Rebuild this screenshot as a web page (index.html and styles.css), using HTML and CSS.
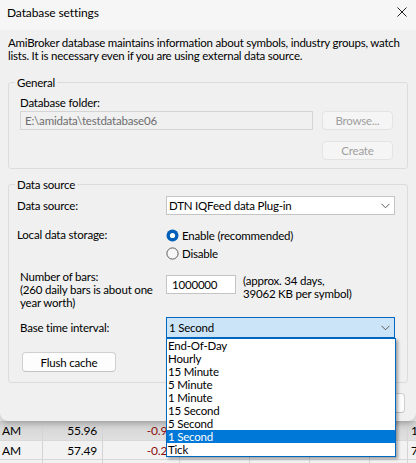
FILE: index.html
```html
<!DOCTYPE html>
<html>
<head>
<meta charset="utf-8">
<title>Database settings</title>
<link rel="stylesheet" href="styles.css">
</head>
<body>
<div class="dialog">
  <div class="titlebar">
    <span class="title">Database settings</span>
    <svg class="close" width="10" height="10" viewBox="0 0 10 10"><path d="M0.5 0.5 L9.5 9.5 M9.5 0.5 L0.5 9.5" stroke="#222" stroke-width="1" fill="none"/></svg>
  </div>
  <div class="content">
    <p class="intro">AmiBroker database maintains information about symbols, industry groups, watch<br>lists. It is necessary even if you are using external data source.</p>

    <fieldset class="group general">
      <legend>General</legend>
      <div class="field-label">Database folder:</div>
      <div class="folder-row">
        <div class="textbox disabled">E:\amidata\testdatabase06</div>
        <div class="btn disabled browse">Browse...</div>
      </div>
      <div class="create-row"><div class="btn disabled browse">Create</div></div>
    </fieldset>

    <fieldset class="group source">
      <legend>Data source</legend>
      <div class="row row-source">
        <div class="row-label shift">Data source:</div>
        <div class="select">
          <span>DTN IQFeed data Plug-in</span>
          <svg class="chevron" width="9" height="6" viewBox="0 0 9 6"><path d="M0.5 0.8 L4.5 4.8 L8.5 0.8" stroke="#5a5a5a" stroke-width="1" fill="none"/></svg>
        </div>
      </div>
      <div class="row row-storage">
        <div class="row-label shift tall">Local data storage:</div>
        <div class="radios">
          <div class="radio">
            <svg width="13" height="13" viewBox="0 0 13 13"><circle cx="6.5" cy="6.5" r="6" fill="#005fb8"/><circle cx="6.5" cy="6.5" r="2.6" fill="#fff"/></svg>
            <span>Enable (recommended)</span>
          </div>
          <div class="radio">
            <svg width="13" height="13" viewBox="0 0 13 13"><circle cx="6.5" cy="6.5" r="5.6" fill="#f7f7f7" stroke="#5c5c5c" stroke-width="1"/></svg>
            <span>Disable</span>
          </div>
        </div>
      </div>
      <div class="row row-bars">
        <div class="row-label">Number of bars:<br>(260 daily bars is about one<br>year worth)</div>
        <div class="bars">
          <div class="textbox bars-input">1000000</div>
          <div class="approx">(approx. 34 days,<br>39062 KB per symbol)</div>
        </div>
      </div>
      <div class="row row-interval">
        <div class="row-label">Base time interval:</div>
        <div class="select focused">
          <span>1 Second</span>
          <svg class="chevron" width="9" height="6" viewBox="0 0 9 6"><path d="M0.5 0.8 L4.5 4.8 L8.5 0.8" stroke="#5a5a5a" stroke-width="1" fill="none"/></svg>
        </div>
      </div>
      <div class="row row-flush">
        <div class="btn flush">Flush cache</div>
      </div>
    </fieldset>

    <div class="button-row"><div class="btn ok">OK</div></div>
  </div>
</div>

<div class="sheet">
  <div class="sheet-row first">
    <div class="cell">AM</div>
    <div class="cell num">55.96</div>
    <div class="cell num neg">-0.97</div>
    <div class="cell"></div>
    <div class="cell"></div>
    <div class="cell"></div>
    <div class="cell"></div>
    <div class="cell last">1</div>
  </div>
  <div class="sheet-row">
    <div class="cell">AM</div>
    <div class="cell num">57.49</div>
    <div class="cell num neg">-0.21</div>
    <div class="cell"></div>
    <div class="cell"></div>
    <div class="cell"></div>
    <div class="cell"></div>
    <div class="cell last">7</div>
  </div>
  <div class="sheet-row">
    <div class="cell"></div>
    <div class="cell"></div>
    <div class="cell"></div>
    <div class="cell"></div>
    <div class="cell"></div>
    <div class="cell"></div>
    <div class="cell"></div>
    <div class="cell last"></div>
  </div>
</div>

<div class="dropdown">
  <div class="item">End-Of-Day</div>
  <div class="item">Hourly</div>
  <div class="item">15 Minute</div>
  <div class="item">5 Minute</div>
  <div class="item">1 Minute</div>
  <div class="item">15 Second</div>
  <div class="item">5 Second</div>
  <div class="item selected">1 Second</div>
  <div class="item">Tick</div>
</div>
</body>
</html>
```

FILE: styles.css
```css
* { box-sizing: border-box; }
html, body { margin: 0; padding: 0; }
body {
  width: 416px;
  height: 463px;
  overflow: hidden;
  position: relative;
  background: #f3f3f3;
  font-family: Lato, "Noto Sans", sans-serif;
  font-size: 11.5px;
  letter-spacing: -0.2px;
  line-height: 13px;
  color: #000;
}

.dialog {
  position: relative;
  z-index: 1;
  background: #f0f0f0;
  border-radius: 0 0 8px 8px;
  box-shadow: 0 2px 6px rgba(0, 0, 0, 0.28);
}

.titlebar {
  height: 30px;
  background: #f6f6f6;
  display: flex;
  justify-content: space-between;
  align-items: flex-start;
  padding: 6px 9px 0 7px;
}
.title { line-height: 13px; font-size: 12px; letter-spacing: -0.1px; }
.close { margin-top: 1px; }

.content { padding: 6px 8px 8px 8px; }
.intro { margin: 0; white-space: nowrap; letter-spacing: -0.23px; }

.group {
  margin: 14px 0 0 0;
  padding: 7px 11px 8px 11px;
  border: 1px solid #dcdcdc;
  border-radius: 3px;
  min-width: 0;
}
.group legend {
  padding: 0 2px;
  margin-left: -5px;
  line-height: 13px;
}
.group.source { margin-top: 9px; padding-top: 5px; padding-bottom: 10px; }

.folder-row { display: flex; gap: 9px; margin-top: 2px; }
.textbox {
  height: 19px;
  border: 1px solid #c4c4c4;
  background: #fff;
  padding-left: 4px;
  line-height: 17px;
}
.textbox.disabled {
  width: 293px;
  background: #f0f0f0;
  border-color: #d4d4d4;
  color: #6e6e6e;
}
.btn {
  height: 19px;
  border: 1px solid #d0d0d0;
  border-bottom-color: #c2c2c2;
  border-radius: 4px;
  background: #fdfdfd;
  display: flex;
  align-items: center;
  justify-content: center;
}
.btn.disabled {
  color: #9f9f9f;
  background: #f5f5f5;
  border-color: #e3e3e3;
}
.browse { width: 71px; }
.create-row { display: flex; justify-content: flex-end; padding-right: 3px; margin-top: 11px; }

.row { display: flex; }
.row-label { width: 146px; flex: none; white-space: nowrap; }
.row-label.shift { margin-left: -3px; width: 149px; }
.row-source { align-items: center; }
.row-storage { margin-top: 11px; }
.row-label.tall { line-height: 18px; }
.row-bars { margin-top: 8px; }
.row-interval { margin-top: 8px; align-items: center; }
.row-flush { margin-top: 14px; }

.select {
  width: 229px;
  height: 19px;
  background: #fff;
  border: 1px solid #c4c4c4;
  display: flex;
  align-items: center;
  justify-content: space-between;
  padding: 0 4px 0 2px;
}
.select.focused {
  height: 21px;
  background: #cce4f7;
  border-color: #0067c0;
}
.chevron { flex: none; }

.radios { display: flex; flex-direction: column; }
.radio { display: flex; align-items: center; gap: 3px; height: 18px; }

.bars { display: flex; align-items: flex-start; }
.bars-input { width: 70px; margin-top: 5px; padding-left: 5px; }
.approx { margin-left: 7px; margin-top: 4px; white-space: nowrap; }

.flush { width: 94px; height: 20px; margin-left: 2px; }

.button-row { display: flex; justify-content: flex-end; margin-top: 10px; padding-right: 3px; }
.ok { width: 75px; height: 20px; }

.sheet { display: flex; flex-direction: column; }
.sheet-row {
  display: grid;
  grid-template-columns: 43px 60px 77px 70px 60px 60px 38px 8px;
  height: 19px;
  background: #f2f2f2;
  border-bottom: 1px solid #d8d8d8;
  font-size: 12px;
}
.sheet-row.first { background: linear-gradient(#d2d2d2, #e0e0e0); height: 20px; }
.cell {
  border-right: 1px solid #d4d4d4;
  display: flex;
  align-items: center;
  padding-left: 2px;
  white-space: nowrap;
  overflow: hidden;
}
.cell.num { justify-content: flex-end; padding-right: 5px; }
.cell.neg { color: #8c1010; }
.cell.last { border-right: none; padding-left: 3px; }

.dropdown {
  position: absolute;
  left: 166px;
  top: 338px;
  width: 230px;
  height: 119px;
  z-index: 5;
  background: #fff;
  border: 1px solid #0067c0;
  box-shadow: 2px 2px 3px rgba(0, 0, 0, 0.35);
}
.item { height: 13px; line-height: 13px; padding-left: 1px; white-space: nowrap; }
.item.selected { background: #0078d7; color: #fff; }
```
